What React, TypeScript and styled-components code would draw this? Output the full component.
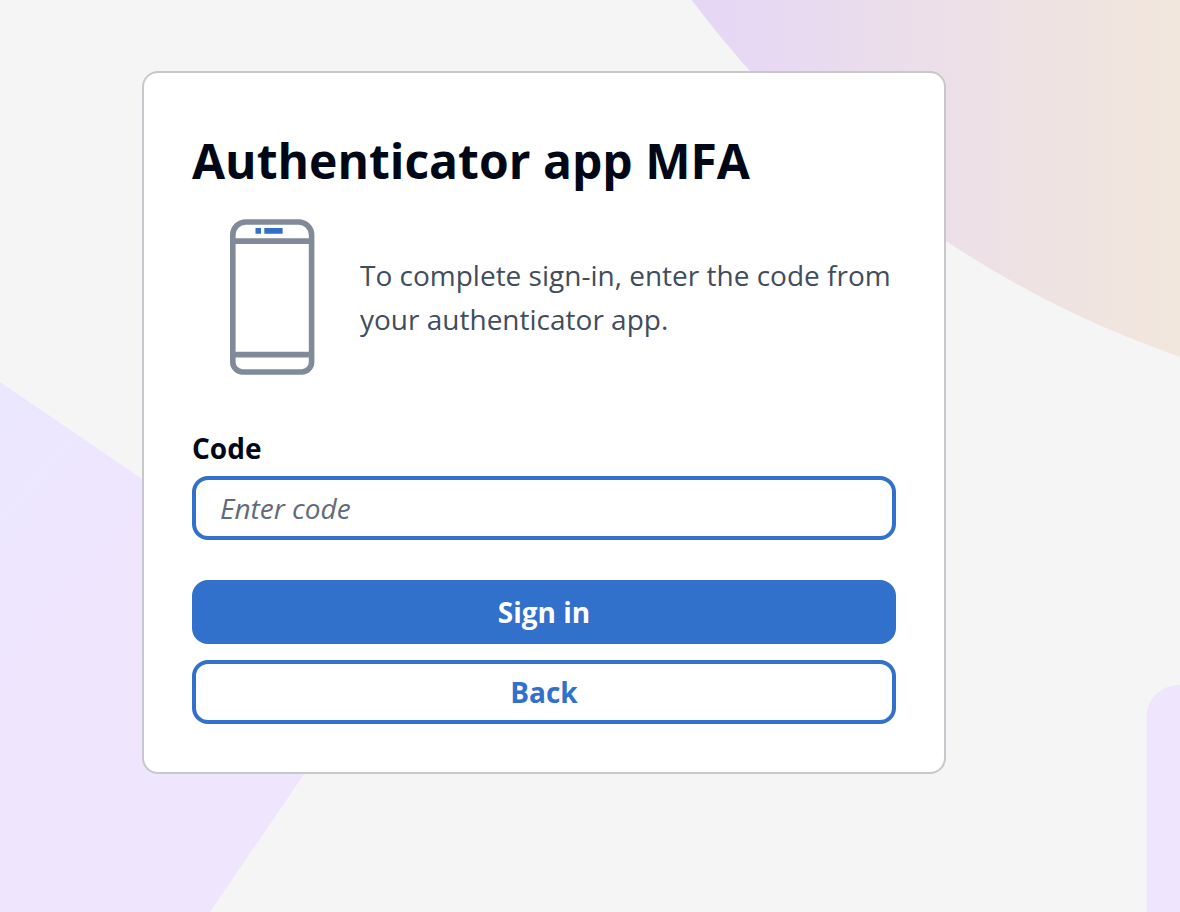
import React from 'react';
import styled, { createGlobalStyle, css } from 'styled-components';

const colors = {
  page: '#f5f5f5',
  card: '#ffffff',
  cardBorder: '#c7c7ce',
  heading: '#000716',
  body: '#414d5c',
  placeholder: '#5f6b7a',
  primary: '#3170cb',
  outline: '#808b9a',
};

const GlobalStyle = createGlobalStyle`
  *, *::before, *::after { box-sizing: border-box; }
  body {
    margin: 0;
    background: ${colors.page};
    font-family: 'Open Sans', 'Noto Sans', sans-serif;
    font-size: 28px;
    color: ${colors.heading};
  }
`;

const Page = styled.main`
  position: relative;
  min-height: 100vh;
  padding: 71px 142px;
  overflow: hidden;

  @media (max-width: 900px) {
    padding: 24px;
  }
`;

const Backdrop = styled.svg`
  position: absolute;
  inset: 0;
  width: 100%;
  height: 100%;
`;

const Card = styled.form`
  position: relative;
  max-width: 804px;
  padding: 48px;
  background: ${colors.card};
  border: 2px solid ${colors.cardBorder};
  border-radius: 16px;
`;

const Title = styled.h1`
  margin: 0 0 16px;
  font-size: 48px;
  line-height: 80px;
  font-weight: 700;
`;

const Instructions = styled.div`
  display: flex;
  align-items: center;
  gap: 8px;
  margin-bottom: 51px;
`;

const PhoneIcon = styled.svg`
  flex: none;
  width: 160px;
  height: 160px;
`;

const Description = styled.p`
  margin: 0;
  color: ${colors.body};
  line-height: 44px;
`;

const Field = styled.div`
  display: flex;
  flex-direction: column;
  gap: 8px;
  margin-bottom: 40px;
`;

const Label = styled.label`
  font-weight: 700;
  line-height: 40px;
`;

const control = css`
  width: 100%;
  height: 64px;
  border: 4px solid ${colors.primary};
  border-radius: 16px;
  font-family: inherit;
  font-size: 28px;
`;

const CodeInput = styled.input`
  ${control}
  padding: 0 24px;
  background: ${colors.card};
  color: ${colors.heading};
  outline: none;

  &::placeholder {
    color: ${colors.placeholder};
    font-style: italic;
    opacity: 1;
  }
`;

const Actions = styled.div`
  display: flex;
  flex-direction: column;
  gap: 16px;
`;

const Button = styled.button<{ $primary?: boolean }>`
  ${control}
  padding: 0 24px;
  font-weight: 700;
  cursor: pointer;
  background: ${({ $primary }) => ($primary ? colors.primary : colors.card)};
  color: ${({ $primary }) => ($primary ? colors.card : colors.primary)};
`;

function BackgroundShapes() {
  return (
    <Backdrop viewBox="0 0 1180 912" preserveAspectRatio="xMinYMin slice" aria-hidden="true">
      <defs>
        <linearGradient id="disc" gradientUnits="userSpaceOnUse" x1="700" y1="0" x2="1180" y2="0">
          <stop offset="0" stopColor="#e6d7f6" />
          <stop offset="0.5" stopColor="#ecdfe8" />
          <stop offset="1" stopColor="#f2e7dc" />
        </linearGradient>
        <linearGradient id="slab" gradientUnits="userSpaceOnUse" x1="-60" y1="460" x2="150" y2="640">
          <stop offset="0" stopColor="#eae7ff" />
          <stop offset="0.4" stopColor="#ede6fe" />
          <stop offset="1" stopColor="#efe5fd" />
        </linearGradient>
      </defs>
      <circle cx="1515" cy="-614" r="1027" fill="url(#disc)" />
      <path d="M0 382L390 648L210 912H0Z" fill="url(#slab)" />
      <rect x="1146.5" y="685" width="300" height="400" rx="32" fill="#efe5fd" />
    </Backdrop>
  );
}

function Phone() {
  return (
    <PhoneIcon viewBox="0 0 160 160" fill="none" aria-hidden="true">
      <g stroke={colors.outline} strokeWidth="5.6">
        <path d="M53.8 5H106.6A13 13 0 0 1 119.6 18V145A10 10 0 0 1 109.6 155H50.8A10 10 0 0 1 40.8 145V18A13 13 0 0 1 53.8 5Z" />
        <path d="M40.8 24.1H119.6M40.8 137.6H119.6" />
      </g>
      <path d="M63.5 11H69V16.8H63.5ZM72.3 11H90.6V16.8H72.3Z" fill={colors.primary} />
    </PhoneIcon>
  );
}

export default function App() {
  return (
    <>
      <GlobalStyle />
      <Page>
        <BackgroundShapes />
        <Card onSubmit={(event: React.FormEvent) => event.preventDefault()}>
          <Title>Authenticator app MFA</Title>
          <Instructions>
            <Phone />
            <Description>To complete sign-in, enter the code from your authenticator app.</Description>
          </Instructions>
          <Field>
            <Label htmlFor="code">Code</Label>
            <CodeInput
              id="code"
              name="code"
              type="text"
              inputMode="numeric"
              autoComplete="one-time-code"
              placeholder="Enter code"
            />
          </Field>
          <Actions>
            <Button type="submit" $primary>
              Sign in
            </Button>
            <Button type="button">Back</Button>
          </Actions>
        </Card>
      </Page>
    </>
  );
}
